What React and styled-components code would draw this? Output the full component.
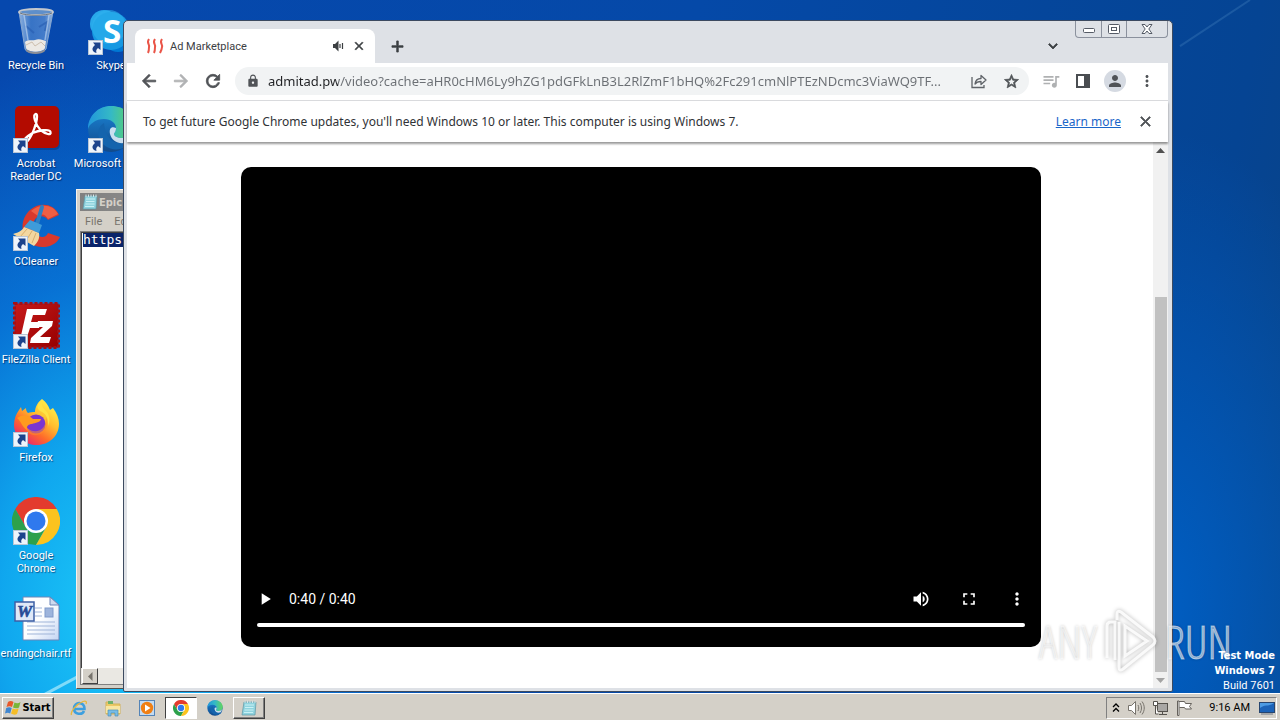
import React, { useState } from 'react'
import styled, { createGlobalStyle } from 'styled-components';
import {
    MdAdd, MdArrowBack, MdArrowForward, MdClose, MdExpandMore, MdFullscreen, MdLock,
    MdMoreVert, MdPerson, MdPlayArrow, MdQueueMusic, MdRefresh, MdStarBorder, MdVolumeUp
} from 'react-icons/md';

const RecycleBin = () => (
    <svg width="48" height="48" viewBox="0 0 48 48">
        <defs>
            <linearGradient id="bin" x1="0" x2="1" y1="0" y2="0">
                <stop offset="0" stopColor="#b4cfee" stopOpacity=".8" />
                <stop offset=".35" stopColor="#4d86cf" stopOpacity=".7" />
                <stop offset=".75" stopColor="#5e92d6" stopOpacity=".7" />
                <stop offset="1" stopColor="#bdd5f0" stopOpacity=".8" />
            </linearGradient>
        </defs>
        <path d="M7 5L13 42C14 47 32 47 34 42L41 5Z" fill="url(#bin)" stroke="#86a6cf" />
        <path d="M13 35c3-3 7-1 10-2 4-2 8 0 11 1l-1 7c-2 5-17 5-19 0z" fill="#ece9e4" />
        <path d="M14 38l6-3 3 4 6-4 4 4" fill="none" stroke="#cdbfae" />
        <path d="M14 42c4 4 15 4 19 0l0 2c-3 4-16 4-19 0z" fill="#8b8e96" />
        <path d="M14 19l8 7M27 20l8-5-2 9" stroke="#2a5fb4" strokeWidth="2" fill="none" opacity=".7" />
        <path d="M12 8l4 25M37 8l-4 25" stroke="#dcebfa" strokeWidth="1.5" opacity=".5" />
        <ellipse cx="24" cy="5" rx="17" ry="3" fill="#5f8fca" stroke="#c3c7cd" strokeWidth="1.800" />
        <path d="M8 6c6 3 26 3 32 0" stroke="#6b7684" fill="none" />
    </svg>
)

const Skype = () => (
    <svg width="48" height="48" viewBox="0 0 48 48">
        <circle cx="17" cy="17" r="14" fill="#28a8ea" />
        <circle cx="31" cy="31" r="14" fill="#0078d4" />
        <circle cx="24" cy="24" r="19" fill="#1698e2" />
        <circle cx="22" cy="20" r="17" fill="#2fb3ef" opacity=".6" />
        <text x="25" y="36" textAnchor="middle" fontFamily="Open Sans, sans-serif" fontWeight="700" fontSize="33" fill="#fff">S</text>
    </svg>
)

const Acrobat = () => (
    <svg width="48" height="48" viewBox="0 0 48 48">
        <rect x="4" y="2" width="44" height="43" rx="5" fill="#06316e" opacity=".45" />
        <rect x="3" y="1" width="44" height="42" rx="5" fill="#b30b00" />
        <path d="M22.500 10c-3 1 0 11 5 16 5 4 11 6 10 2-1-4-13-1-18 1-5 3-10 7-8 9 3 2 8-8 10-14 2-5 4-15 1-14z" transform="translate(1 -1)" fill="none" stroke="#fff" strokeWidth="2.300" />
    </svg>
)

const Edge = ({ size = 48 }) => (
    <svg width={size} height={size} viewBox="0 0 48 48">
        <defs>
            <linearGradient id="edgeTop" x1="0" x2="1">
                <stop offset="0" stopColor="#2196dc" />
                <stop offset=".5" stopColor="#35b9c5" />
                <stop offset="1" stopColor="#62d65a" />
            </linearGradient>
            <linearGradient id="edgeLow" x1="0" x2="0" y1="0" y2="1">
                <stop offset="0" stopColor="#1b86d8" />
                <stop offset="1" stopColor="#114a8b" />
            </linearGradient>
        </defs>
        <circle cx="24" cy="24" r="23" fill="url(#edgeLow)" />
        <path d="M1 24C1 11 11 1 24 1c14 0 23 9 23 20 0 8-6 12-12 12-5 0-8-2-8-4 0-1 2-2 2-6 0-5-5-9-12-9C9 14 2 19 1 24z" fill="url(#edgeTop)" />
        <path d="M17 18c-5 3-7 9-5 15 3 8 12 13 21 11 5-1 9-4 11-8-6 3-13 3-18 0-6-4-8-9-9-18z" fill="#1464ad" />
        <path d="M29 23c0 4-2 5-2 6 0 2 3 4 8 4 4 0 8-2 10-5-1 4-2 7-4 9-8 3-16 0-18-8-1-5 1-8 6-6z" fill="#e9f5fb" opacity=".85" />
    </svg>
)

const CCleaner = () => (
    <svg width="48" height="48" viewBox="0 0 48 48">
        <path d="M47 12C42 0 27-1 18 7 8 16 8 32 18 40c9 7 25 5 30-6l-12-4c-2 5-8 5-12 1-5-6-3-15 2-17 4-2 8 0 10 3z" fill="#d9392c" />
        <path d="M46 11C41 1 28 0 19 8l7 5c4-3 8-1 10 3z" fill="#ee5f44" />
        <path d="M30 4l-5 17" stroke="#2d7fc2" strokeWidth="4" strokeLinecap="round" />
        <path d="M18 17l12 5-3 8-15-6z" fill="#3e9bda" />
        <path d="M12 24l15 6c1 5-1 9-5 13L1 31c4-1 9-3 11-7z" fill="#f3d7a0" />
        <path d="M15 26l-7 8M20 28l-6 10M24 30l-4 10" stroke="#d9af6c" />
    </svg>
)

const FileZilla = () => (
    <svg width="48" height="48" viewBox="0 0 48 48">
        <defs>
            <linearGradient id="fz" x1="0" x2="1" y1="0" y2="1">
                <stop offset="0" stopColor="#c81a1a" />
                <stop offset="1" stopColor="#960000" />
            </linearGradient>
        </defs>
        <rect x="2.500" y="2.500" width="44" height="44" fill="url(#fz)" stroke="#a50f14" strokeWidth="3" strokeDasharray="3 2" />
        <path d="M15 8h20l-2 6H21l-2 7h10l-2 6h-9l-4 12H8z" fill="#fff" />
        <path d="M26 20h15l-1 5-12 11h11l-2 6H18l1-5 12-11h-7z" fill="#fff" />
    </svg>
)

const Firefox = () => (
    <svg width="48" height="48" viewBox="0 0 48 48">
        <defs>
            <linearGradient id="ffBody" x1=".85" x2=".2" y1=".1" y2="1">
                <stop offset="0" stopColor="#fff04a" />
                <stop offset=".35" stopColor="#ffbd2e" />
                <stop offset=".65" stopColor="#ff6a2a" />
                <stop offset="1" stopColor="#e6197b" />
            </linearGradient>
        </defs>
        <path d="M30 0c4 3 6 6 8 11l3-2c4 5 6 11 6 16 0 12-10 21-22 21S2 38 2 26c0-6 2-11 5-15l2-3 1 4 4-3c0 3 1 4 2 5 2-1 5-1 7-1 0-5 3-10 7-13z" fill="url(#ffBody)" />
        <circle cx="24" cy="25" r="9.500" fill="#7b35d0" />
        <path d="M34 18c4 9-1 17-9 18-7 1-12-4-13-11 3 5 8 8 13 7 6-1 9-6 9-14z" fill="#ff8a2a" opacity=".55" />
        <path d="M5 19c6-4 12-3 16 1l8 0c0 3-6 4-9 5-3 0-6 2-5 6-5-3-6-9-10-12z" fill="#ff9a1f" />
        <path d="M28 12c6 2 9 8 8 15 3-6 1-12-2-15-3-3-5-6-4-11-5 4-6 8-2 11z" fill="#ffe245" />
    </svg>
)

const Chrome = ({ size = 48 }) => (
    <svg width={size} height={size} viewBox="0 0 48 48">
        <path d="M24 24L3.200 12A24 24 0 0 1 44.800 12z" fill="#e33b2e" />
        <path d="M3.200 12L13.600 30 24 24 24 12z" fill="#e33b2e" />
        <path d="M13.600 30A12 12 0 0 0 24 36L34 30 24 48A24 24 0 0 1 3.200 12z" fill="#2da14c" />
        <path d="M24 12h20.800A24 24 0 0 1 24 48L34.400 30z" fill="#fcc31e" />
        <circle cx="24" cy="24" r="12" fill="#fff" />
        <circle cx="24" cy="24" r="9.500" fill="#2f79ee" />
    </svg>
)

const WordFile = () => (
    <svg width="48" height="48" viewBox="0 0 48 48">
        <defs>
            <linearGradient id="sheet" x1="0" x2="1" y1="0" y2="1">
                <stop offset=".5" stopColor="#fdfeff" />
                <stop offset="1" stopColor="#c4d5f3" />
            </linearGradient>
        </defs>
        <path d="M11 2h27l9 8v35H11z" fill="url(#sheet)" stroke="#6d86b8" />
        <path d="M38 2v8h9z" fill="#cfdaee" stroke="#6d86b8" />
        <path d="M23 13h7M23 17h7M23 21h7M15 27h28M15 31h28M15 35h28M15 39h28" stroke="#9fb4d8" />
        <rect x="33" y="13" width="8" height="9" fill="#9db4dc" stroke="#7f99ca" />
        <rect x="3" y="7" width="19" height="19" fill="#dfe8f8" stroke="#3d5fa5" strokeWidth="1.500" />
        <text x="12.500" y="22" textAnchor="middle" fontFamily="Liberation Serif, serif" fontStyle="italic" fontWeight="700" fontSize="17" fill="#274b96" stroke="#274b96" strokeWidth=".6">W</text>
    </svg>
)

const ShortcutArrow = () => (
    <svg width="15" height="15" viewBox="0 0 15 15">
        <rect x=".5" y=".5" width="14" height="14" fill="#eef4fb" stroke="#b9c6d6" />
        <path d="M5 2.500h7.500V10L10 8c-2 1.500-2 3-1.500 5C4 12 3 8 7 5z" fill="#1c438c" />
    </svg>
)

const NotepadIcon = ({ size = 16 }) => (
    <svg width={size} height={size} viewBox="0 0 16 16">
        <path d="M3 2h12l-1 13H1z" fill="#8fd3de" stroke="#5b97a5" strokeWidth=".7" />
        <path d="M4 5h9M4 7.500h8.500M3.500 10h9M3 12.500h9" stroke="#c9f1f5" />
        <path d="M4 .5v2.500M6.500 .5v2.500M9 .5v2.500M11.500 .5v2.500M14 .5v2.500" stroke="#d6e4e7" />
    </svg>
)

const Flame = () => (
    <svg width="18" height="18" viewBox="0 0 18 18" fill="none" stroke="#ea5548" strokeWidth="2">
        <path d="M3 2c-3 4 1 5 0 8 0 2 0 4-1 6M9 2c-3 4 1 5 0 8 0 2 0 4-1 6M16 2c-3 4 1 5 0 8 0 2-1 4-2 6" />
    </svg>
)

const TabSpeaker = () => (
    <svg width="12" height="12" viewBox="0 0 12 12">
        <path d="M1 4h2l3.500-3.500v11L3 8H1z" fill="#3c4043" />
        <path d="M8 4v4M10.500 3v6" stroke="#3c4043" strokeWidth="1.200" />
    </svg>
)

const ShareIcon = () => (
    <svg width="18" height="18" viewBox="0 0 18 18" fill="none" stroke="#5f6368" strokeWidth="1.300">
        <path d="M2 5V15.500H14V13" />
        <path d="M5 12c.5-4 3-5.500 6-5.500V3.500l5 4.500-5 4.500V9.500c-2.500 0-4.500.5-6 2.500z" strokeLinejoin="round" />
    </svg>
)

const SidePanelIcon = () => (
    <svg width="16" height="16" viewBox="0 0 16 16">
        <path d="M1 1h14v14H1zM3 3v10h6V3z" fill="#4a4d51" fillRule="evenodd" />
    </svg>
)

const WindowsFlag = () => (
    <svg width="17" height="17" viewBox="0 0 17 17">
        <path d="M3 3c2-1.500 4-1 5.500 0L7 8C5.500 7 3.500 7 1.500 8z" fill="#e8582a" />
        <path d="M9.500 3.500c2 1 4 1 6-.5L14 8.500c-2 1.200-4 1-6 0z" fill="#79b63a" />
        <path d="M1.200 9c2-1 4-1 5.500 0l-1.500 5.500C3.500 13.500 2 13.500 0 14.500z" fill="#3f86d0" />
        <path d="M7.700 9.500c2 1 4 1 6 0L12 15c-2 1-4 .8-6-.5z" fill="#f5bd27" />
    </svg>
)

const InternetExplorer = () => (
    <svg width="18" height="18" viewBox="0 0 18 18" fill="none">
        <path d="M4 10h10.500C15 2.500 4 2 4 9.500 4 16 12.500 16 14 12" stroke="#3d9fdf" strokeWidth="2.600" />
        <path d="M1.500 16C0 13 6 5 13 2.500c3-1 4 0 3 2.500" stroke="#e7b73c" strokeWidth="1.300" />
    </svg>
)

const Explorer = () => (
    <svg width="18" height="18" viewBox="0 0 18 18">
        <path d="M2 3h6l1 2h7v10H2z" fill="#ecc964" stroke="#d1b25c" />
        <path d="M4 2h5v3H4z" fill="#6fb26a" />
        <path d="M2 7h14v7H2z" fill="#f8e6a2" />
        <path d="M4 17v-6h10v6h-3v-3H7v3z" fill="#77bce6" stroke="#4d8fb8" strokeWidth=".7" />
    </svg>
)

const MediaPlayer = () => (
    <svg width="18" height="18" viewBox="0 0 18 18">
        <rect x="1.500" y="1.500" width="15" height="15" fill="#c3dbf2" stroke="#5484b7" />
        <circle cx="9" cy="9" r="6.200" fill="#f07f13" />
        <path d="M7 5.500v7L12.500 9z" fill="#fff" />
    </svg>
)

const TrayChevron = () => (
    <svg width="8" height="10" viewBox="0 0 8 10" fill="none" stroke="#000" strokeWidth="1.300">
        <path d="M1 4l3-3 3 3M1 8.500l3-3 3 3" />
    </svg>
)

const TrayVolume = () => (
    <svg width="18" height="16" viewBox="0 0 18 16" fill="none" stroke="#77736c">
        <path d="M1.500 5.500h3l4-4v13l-4-4h-3z" fill="#fff" />
        <path d="M11 5c1 2 1 4 0 6M13 3c2 3 2 7 0 10M15 1.500c3 4 3 9 0 13" />
    </svg>
)

const TrayNetwork = () => (
    <svg width="17" height="16" viewBox="0 0 17 16" stroke="#55524d">
        <rect x="5.500" y="3.500" width="10" height="8" fill="#a9a7a4" />
        <path d="M7 14.500h8M10.500 12v2" />
        <path d="M1.500 1.500h4v4h-4zM3.500 6v8h3" fill="#fff" />
    </svg>
)

const TrayFlag = () => (
    <svg width="17" height="16" viewBox="0 0 17 16" stroke="#66625c" fill="#fff">
        <path d="M2.500 1.500h6l1 2h6l-2 3 2 2.500h-6l-1-1.500h-5" />
        <path d="M1.500 1v14.500h1.500V1z" />
    </svg>
)

const ShowDesktop = () => (
    <svg width="16" height="14" viewBox="0 0 16 14">
        <rect x=".5" y="1.500" width="15" height="10" fill="#1c63b8" stroke="#27456f" />
        <path d="M1 7c5-4 9-1 14-5v-0H1z" fill="#4d9be3" />
        <path d="M2 13h12" stroke="#6e7987" />
    </svg>
)

const MinimizeGlyph = () => (
    <svg width="12" height="10" viewBox="0 0 12 10">
        <rect x=".5" y="4.500" width="11" height="4" rx="1" fill="#fff" stroke="#555b66" />
    </svg>
)

const MaximizeGlyph = () => (
    <svg width="12" height="10" viewBox="0 0 12 10" fill="#fff" stroke="#555b66">
        <rect x=".5" y=".5" width="11" height="9" rx="1" />
        <rect x="3.500" y="3.500" width="5" height="3" />
    </svg>
)

const CloseGlyph = () => (
    <svg width="12" height="10" viewBox="0 0 12 10">
        <path d="M1 .5h3l2 2.500 2-2.500h3L7.800 5 11 9.500H8L6 7 4 9.500H1L4.200 5z" fill="#fff" stroke="#555b66" />
    </svg>
)

const Triangle = ({ dir = 'up', color = '#505050' }) => (
    <svg width="9" height="9" viewBox="0 0 9 9" fill={color}>
        {dir === 'up' && <path d="M0 7l4.500-5L9 7z" />}
        {dir === 'down' && <path d="M0 2l4.500 5L9 2z" />}
        {dir === 'left' && <path d="M6.500 0v9L2 4.500z" />}
    </svg>
)

const shortcuts = [
    { name: 'Recycle Bin', icon: <RecycleBin /> },
    { name: 'Acrobat Reader DC', icon: <Acrobat />, link: true },
    { name: 'CCleaner', icon: <CCleaner />, link: true },
    { name: 'FileZilla Client', icon: <FileZilla />, link: true },
    { name: 'Firefox', icon: <Firefox />, link: true },
    { name: 'Google Chrome', icon: <Chrome />, link: true },
    { name: 'endingchair.rtf', icon: <WordFile /> },
    { name: 'Skype', icon: <Skype />, link: true },
    { name: 'Microsoft Edge', icon: <Edge />, link: true, nowrap: true },
]

const pinned = [
    { name: 'Internet Explorer', icon: <InternetExplorer /> },
    { name: 'Windows Explorer', icon: <Explorer /> },
    { name: 'Windows Media Player', icon: <MediaPlayer /> },
    { name: 'Google Chrome', icon: <Chrome size={16} />, state: 'pressed' },
    { name: 'Microsoft Edge', icon: <Edge size={16} /> },
    { name: 'Notepad', icon: <NotepadIcon size={16} />, state: 'raised' },
]

const Notepad = () => (
    <NotepadWindow>
        <NotepadTitle><NotepadIcon /> Epic</NotepadTitle>
        <NotepadMenu>
            <button>File</button>
            <button>Edit</button>
        </NotepadMenu>
        <NotepadBody>
            <NotepadText><mark>https</mark></NotepadText>
            <NotepadScroll>
                <button aria-label="Scroll left"><Triangle dir="left" color="#77736c" /></button>
            </NotepadScroll>
        </NotepadBody>
    </NotepadWindow>
)

const Browser = () => {
    const [url, setUrl] = useState("admitad.pw/video?cache=aHR0cHM6Ly9hZG1pdGFkLnB3L2RlZmF1bHQ%2Fc291cmNlPTEzNDcmc3ViaWQ9TF...");
    const [time, setTime] = useState(40);

    return (
        <BrowserWindow>
            <TabStrip>
                <Tab>
                    <Flame />
                    <TabTitle>Ad Marketplace</TabTitle>
                    <TabSpeaker />
                    <TabClose aria-label="Close tab"><MdClose size={14} /></TabClose>
                </Tab>
                <NewTab aria-label="New tab"><MdAdd size={19} /></NewTab>
                <TabSearch aria-label="Search tabs"><MdExpandMore size={18} /></TabSearch>
                <WindowButtons>
                    <WindowButton aria-label="Minimize"><MinimizeGlyph /></WindowButton>
                    <WindowButton aria-label="Maximize"><MaximizeGlyph /></WindowButton>
                    <WindowButton $wide aria-label="Close"><CloseGlyph /></WindowButton>
                </WindowButtons>
            </TabStrip>
            <Toolbar>
                <ToolButton aria-label="Back" $bold><MdArrowBack size={20} /></ToolButton>
                <ToolButton aria-label="Forward" $bold $faded><MdArrowForward size={20} /></ToolButton>
                <ToolButton aria-label="Reload" $bold><MdRefresh size={20} /></ToolButton>
                <Omnibox>
                    <MdLock size={14} />
                    <input aria-label="Address" value={url} onChange={(e) => setUrl(e.target.value)} />
                    <ToolButton aria-label="Share"><ShareIcon /></ToolButton>
                    <ToolButton aria-label="Bookmark" $bold><MdStarBorder size={17} /></ToolButton>
                </Omnibox>
                <ToolButton aria-label="Media" $faded><MdQueueMusic size={20} /></ToolButton>
                <ToolButton aria-label="Side panel"><SidePanelIcon /></ToolButton>
                <ToolButton aria-label="Profile"><Avatar><MdPerson size={18} /></Avatar></ToolButton>
                <ToolButton aria-label="Menu"><MdMoreVert size={18} /></ToolButton>
            </Toolbar>
            <InfoBar>
                <p>To get future Google Chrome updates, you'll need Windows 10 or later. This computer is using Windows 7.</p>
                <a href="#learn">Learn more</a>
                <ToolButton aria-label="Dismiss" $bold><MdClose size={17} /></ToolButton>
            </InfoBar>
            <Viewport>
                <Page>
                    <Player>
                        <Controls>
                            <PlayerButton aria-label="Play"><MdPlayArrow size={20} /></PlayerButton>
                            <Time>0:40 / 0:40</Time>
                            <PlayerButton aria-label="Mute"><MdVolumeUp size={20} /></PlayerButton>
                            <PlayerButton aria-label="Full screen"><MdFullscreen size={20} /></PlayerButton>
                            <PlayerButton aria-label="More options"><MdMoreVert size={20} /></PlayerButton>
                        </Controls>
                        <Seek
                            type="range"
                            aria-label="Seek"
                            min="0"
                            max="40"
                            value={time}
                            onChange={(e) => setTime(Number(e.target.value))}
                        />
                    </Player>
                </Page>
                <Scrollbar>
                    <button aria-label="Scroll up"><Triangle /></button>
                    <Track><Thumb /></Track>
                    <button aria-label="Scroll down"><Triangle dir="down" color="#a3a3a3" /></button>
                </Scrollbar>
            </Viewport>
        </BrowserWindow>
    )
}

const App = () => {
    return (
        <Screen>
            <GlobalStyle />
            <Desktop>
                <Wallpaper viewBox="0 0 1280 692" preserveAspectRatio="none">
                    <path d="M36 698L126 650" stroke="#c8f6ff" strokeWidth="3" opacity=".6" />
                    <path d="M1180 46L1250 0" stroke="#4f8cc4" strokeWidth="2" opacity=".3" />
                </Wallpaper>
                <IconGrid>
                    {shortcuts.map((item) => (
                        <Shortcut key={item.name}>
                            <IconBox>
                                {item.icon}
                                {item.link && <Badge><ShortcutArrow /></Badge>}
                            </IconBox>
                            <ShortcutLabel $nowrap={item.nowrap}>{item.name}</ShortcutLabel>
                        </Shortcut>
                    ))}
                </IconGrid>
                <Notepad />
                <Browser />
                <Watermark>
                    <span>ANY</span>
                    <svg width="56" height="66" viewBox="0 0 56 66" fill="none">
                        <path d="M4 50V18q0-4 4-4h4v38M14 12V6q0-4 4-2l32 25q4 4 0 8L20 61q-4 3-4-2V14M22 48V18l22 15z" strokeWidth="3" />
                    </svg>
                    <span>RUN</span>
                </Watermark>
                <BuildInfo>
                    <strong>Test Mode</strong>
                    <strong>Windows 7</strong>
                    <span>Build 7601</span>
                </BuildInfo>
            </Desktop>
            <Taskbar>
                <StartButton><WindowsFlag />Start</StartButton>
                <Pinned>
                    {pinned.map((item) => (
                        <TaskButton key={item.name} aria-label={item.name} $state={item.state}>{item.icon}</TaskButton>
                    ))}
                </Pinned>
                <Tray>
                    <button aria-label="Show hidden icons"><TrayChevron /></button>
                    <button aria-label="Volume"><TrayVolume /></button>
                    <button aria-label="Network"><TrayNetwork /></button>
                    <button aria-label="Action center"><TrayFlag /></button>
                    <Clock>9:16 AM</Clock>
                    <button aria-label="Show desktop"><ShowDesktop /></button>
                </Tray>
            </Taskbar>
        </Screen>
    )
}

export default App;

const GlobalStyle = createGlobalStyle`
    * {
        box-sizing:border-box;
    }
    body {
        margin:0;
        font-family:Tahoma, Roboto, "DejaVu Sans Condensed", sans-serif;
        font-size:11px;
    }
    button, input {
        font:inherit;
        color:inherit;
        padding:0;
        border:none;
        background:none;
    }
    svg {
        display:block;
        flex:none;
    }
    svg path[fill="none"][d^="M0 0h24"] {
        stroke:none;
    }
    strong {
        font-family:Tahoma, "DejaVu Sans Condensed", sans-serif;
    }
`
const Screen = styled.div`
    height:100vh;
    display:flex;
    flex-direction:column;
    overflow:hidden;
`
const Desktop = styled.main`
    position:relative;
    flex:1;
    min-height:0;
    background:
        radial-gradient(ellipse 360px 560px at 110px 610px, #1cc8f8 0%, rgba(16,172,242,.95) 30%, rgba(8,130,228,.7) 60%, rgba(6,80,190,0) 100%),
        radial-gradient(ellipse 260px 480px at 90% 88%, #005fc4 0%, rgba(0,88,184,0) 100%),
        linear-gradient(100deg, #0648ae 0%, #0549a8 50%, #054493 90%, #0a4486 100%);
`
const Wallpaper = styled.svg`
    position:absolute;
    inset:0;
    width:100%;
    height:100%;
`
const IconGrid = styled.div`
    position:relative;
    display:grid;
    grid-auto-flow:column;
    grid-template-rows:repeat(7, 98px);
    grid-auto-columns:72px;
    column-gap:3px;
`
const Shortcut = styled.div`
    display:flex;
    flex-direction:column;
    align-items:center;
    gap:4px;
    padding-top:7px;
`
const IconBox = styled.div`
    position:relative;
`
const Badge = styled.span`
    position:absolute;
    left:1px;
    bottom:0;
`
const ShortcutLabel = styled.span`
    color:#fff;
    line-height:13px;
    text-align:center;
    text-shadow:1px 1px 1px rgba(0,20,70,.6);
    white-space:${(props) => props.$nowrap ? 'nowrap' : 'normal'};
`
const NotepadWindow = styled.section`
    position:absolute;
    left:76px;
    top:189px;
    bottom:4px;
    width:320px;
    display:flex;
    flex-direction:column;
    padding:3px;
    background:#d4d0c8;
    border:1px solid #f4f2ee;
    border-bottom-color:#55524d;
`
const NotepadTitle = styled.div`
    height:18px;
    display:flex;
    align-items:center;
    gap:1px;
    padding-left:2px;
    color:#d4d0c8;
    font-family:Tahoma, "DejaVu Sans Condensed", sans-serif;
    font-weight:700;
    background:linear-gradient(90deg, #808080, #b5b5b5);
`
const NotepadMenu = styled.div`
    height:20px;
    display:flex;
    align-items:center;
    gap:12px;
    padding-left:5px;
    color:#77736c;
`
const NotepadBody = styled.div`
    flex:1;
    display:flex;
    flex-direction:column;
    border:1px solid #808080;
    box-shadow:inset 1px 1px #404040;
    background:#fff;
`
const NotepadText = styled.div`
    flex:1;
    padding:1px 2px;
    font-family:"DejaVu Sans Mono", monospace;
    font-size:13px;
    line-height:14px;
    mark {
        display:inline-block;
        width:100%;
        color:#fff;
        background:#0a246a;
    }
`
const NotepadScroll = styled.div`
    height:16px;
    padding-left:1px;
    background:#eae8e3;
    button {
        width:16px;
        height:16px;
        display:grid;
        place-content:center;
        background:#d4d0c8;
        border:1px solid;
        border-color:#fff #404040 #404040 #fff;
    }
`
const BrowserWindow = styled.section`
    position:absolute;
    left:123px;
    right:107px;
    top:20px;
    bottom:1px;
    display:flex;
    flex-direction:column;
    padding:0 4px 3px 3px;
    background:#dee1e6;
    border:1px solid #3c4a60;
    border-radius:5px 5px 2px 2px;
`
const TabStrip = styled.div`
    height:42px;
    display:flex;
    align-items:flex-end;
    color:#3c4043;
`
const Tab = styled.div`
    width:240px;
    height:34px;
    display:flex;
    align-items:center;
    margin-left:8px;
    padding:0 9px 0 11px;
    gap:6px;
    background:#fff;
    border-radius:8px 8px 0 0;
`
const TabTitle = styled.span`
    flex:1;
    color:#3c4043;
`
const TabClose = styled.button`
    display:grid;
    place-content:center;
    width:14px;
    height:14px;
    margin-left:2px;
    svg {
        stroke-width:1;
    }
`
const NewTab = styled.button`
    width:28px;
    height:34px;
    margin-left:8px;
    display:grid;
    place-content:center;
    svg {
        stroke-width:1;
    }
`
const TabSearch = styled(NewTab)`
    margin-left:auto;
    margin-right:8px;
`
const WindowButtons = styled.div`
    align-self:flex-start;
    display:flex;
    height:17px;
    border:1px solid #8b919d;
    border-top:none;
    border-radius:0 0 4px 4px;
`
const WindowButton = styled.button`
    width:${(props) => props.$wide ? '41px' : '25px'};
    display:grid;
    place-content:center;
    & + & {
        border-left:1px solid #8b919d;
    }
`
const Toolbar = styled.div`
    height:38px;
    display:flex;
    align-items:center;
    padding:0 5px 1px 6px;
    background:#fff;
    border-bottom:1px solid #d9dadd;
`
const ToolButton = styled.button`
    flex:none;
    width:32px;
    height:28px;
    display:grid;
    place-content:center;
    color:#505357;
    opacity:${(props) => props.$faded ? .45 : 1};
    svg {
        stroke-width:${(props) => props.$bold ? '1' : null};
    }
`
const Omnibox = styled.label`
    flex:1;
    min-width:0;
    height:28px;
    display:flex;
    align-items:center;
    margin:0 6px;
    padding:0 2px 0 11px;
    border-radius:14px;
    background:#f1f3f4;
    color:#505357;
    input {
        flex:1;
        min-width:0;
        margin-left:8px;
        font-family:Tahoma, "Noto Sans", sans-serif;
        font-size:13px;
        text-overflow:ellipsis;
        outline:none;
        color:transparent;
        background:linear-gradient(90deg, #202124 70px, #6b6f74 70px);
        background-clip:text;
    }
`
const Avatar = styled.span`
    width:22px;
    height:22px;
    display:grid;
    place-content:center;
    border-radius:50%;
    background:#d5dae2;
`
const InfoBar = styled.div`
    position:relative;
    height:41px;
    display:flex;
    align-items:center;
    padding:0 7px 1px 16px;
    background:#fff;
    box-shadow:0 2px 2px rgba(0,0,0,.4);
    color:#303236;
    font-family:Tahoma, "Noto Sans", sans-serif;
    font-size:12px;
    p {
        flex:1;
        margin:0;
        white-space:nowrap;
    }
    a {
        color:#1a66c9;
        margin-right:8px;
    }
`
const Viewport = styled.div`
    flex:1;
    min-height:0;
    display:flex;
    background:#fff;
`
const Page = styled.div`
    flex:1;
    padding:25px 20px 0 22px;
`
const Player = styled.div`
    max-width:800px;
    aspect-ratio:5 / 3;
    margin:0 auto;
    display:flex;
    flex-direction:column;
    justify-content:flex-end;
    padding:0 16px 20px;
    border-radius:10px;
    background:#000;
    color:#fff;
`
const Controls = styled.div`
    display:flex;
    align-items:center;
    height:48px;
    margin:0 -16px;
`
const PlayerButton = styled.button`
    width:48px;
    height:48px;
    display:grid;
    place-content:center;
`
const Time = styled.span`
    flex:1;
    font-size:14px;
`
const Seek = styled.input`
    appearance:none;
    width:100%;
    height:4px;
    margin:0;
    border-radius:2px;
    background:#fff;
    &::-webkit-slider-thumb {
        appearance:none;
        width:4px;
        height:4px;
    }
`
const Scrollbar = styled.div`
    width:15px;
    display:flex;
    flex-direction:column;
    background:#f1f1f1;
    button {
        height:16px;
        display:grid;
        place-content:center;
    }
`
const Track = styled.div`
    flex:1;
    display:flex;
    align-items:flex-end;
    padding:0 1px 0 2px;
`
const Thumb = styled.div`
    width:100%;
    height:73%;
    background:#c1c1c1;
`
const Watermark = styled.div`
    position:absolute;
    right:48px;
    bottom:19px;
    display:flex;
    align-items:center;
    gap:6px;
    pointer-events:none;
    font-family:"Open Sans Condensed Light", "Noto Sans ExtraCondensed Light", "Roboto Condensed Light", "Liberation Sans Narrow", sans-serif;
    font-size:46px;
    line-height:66px;
    color:rgba(255,255,255,.5);
    -webkit-text-stroke:1px rgba(255,255,255,.5);
    text-shadow:0 0 3px rgba(0,0,0,.28);
    svg {
        stroke:rgba(255,255,255,.85);
        filter:drop-shadow(0 0 2px rgba(0,0,0,.35));
    }
`
const BuildInfo = styled.div`
    position:absolute;
    right:5px;
    bottom:0;
    display:flex;
    flex-direction:column;
    align-items:flex-end;
    line-height:15px;
    color:#fff;
`
const Taskbar = styled.footer`
    height:27px;
    display:flex;
    align-items:center;
    padding:1px 3px 0 2px;
    background:#d4d0c8;
    border-top:1px solid #fff;
`
const StartButton = styled.button`
    width:52px;
    height:22px;
    display:flex;
    align-items:center;
    justify-content:center;
    font-family:Tahoma, "DejaVu Sans Condensed", sans-serif;
    font-weight:700;
    background:#d4d0c8;
    border:1px solid;
    border-color:#fff #404040 #404040 #fff;
    box-shadow:inset -1px -1px #808080;
`
const Pinned = styled.div`
    flex:1;
    display:flex;
    gap:2px;
    margin-left:9px;
`
const TaskButton = styled.button`
    width:32px;
    height:22px;
    display:grid;
    place-content:center;
    border:1px solid transparent;
    ${(props) => props.$state === 'pressed' && `
        background:#fff;
        border-color:#404040 #fff #fff #404040;
    `}
    ${(props) => props.$state === 'raised' && `
        border-color:#fff #404040 #404040 #fff;
        box-shadow:inset -1px -1px #808080;
    `}
`
const Tray = styled.div`
    height:22px;
    display:flex;
    align-items:center;
    gap:7px;
    padding:0 1px 0 5px;
    border:1px solid;
    border-color:#808080 #fff #fff #808080;
`
const Clock = styled.time`
    margin:0 2px 0 9px;
`
